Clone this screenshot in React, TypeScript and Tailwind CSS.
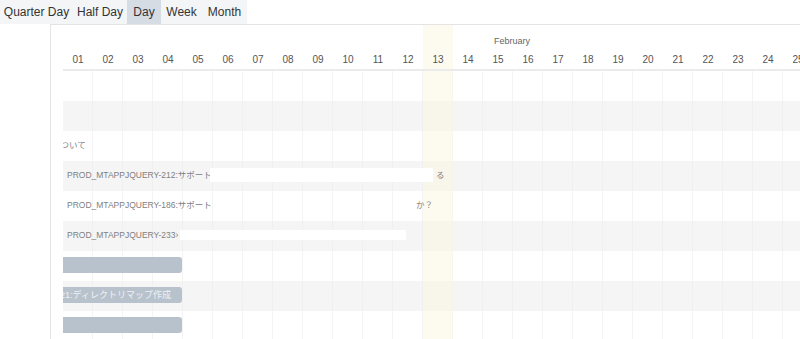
import React from "react";

const days = Array.from({ length: 27 }, (_, i) => String(i + 1).padStart(2, "0"));

const tabs: { label: string; w: string; active?: boolean }[] = [
  { label: "Quarter Day", w: "w-[73px]" },
  { label: "Half Day", w: "w-[54px]" },
  { label: "Day", w: "w-[34px]", active: true },
  { label: "Week", w: "w-[41px]" },
  { label: "Month", w: "w-[45px]" },
];

function Row({ even, children }: { even: boolean; children?: React.ReactNode }) {
  return (
    <div
      className={`h-[30px] flex items-center pb-[2px] bg-[length:30px_100%] ${
        even
          ? "bg-white bg-[linear-gradient(to_right,transparent_29px,#f4f4f4_29px)]"
          : "bg-[#f5f5f5] bg-[linear-gradient(to_right,transparent_29px,#f0f0f0_29px)]"
      }`}
    >
      {children}
    </div>
  );
}

const label = "relative z-[2] shrink-0 text-[8.5px] leading-[12px] text-[#808080] whitespace-nowrap overflow-hidden";

function GrayBar({ children }: { children?: React.ReactNode }) {
  return (
    <div className="ml-[-5px] w-[124px] h-[16px] shrink-0 rounded-[3px] bg-[#b8c2cc] flex items-center pl-[2px] overflow-hidden">
      {children}
    </div>
  );
}

export default function App() {
  return (
    <div className="w-[800px] h-[339px] overflow-hidden bg-white font-['Liberation_Sans','Noto_Sans_CJK_JP',sans-serif]">
      <div className="flex h-[24px] w-[247px] bg-[#f4f5f7] text-[12px] text-[#333]">
        {tabs.map((t) => (
          <button
            key={t.label}
            className={`${t.w} h-full flex items-center justify-center whitespace-nowrap ${t.active ? "bg-[#d6dce4]" : ""}`}
          >
            {t.label}
          </button>
        ))}
      </div>
      <div className="flex">
        <div className="w-[50px] shrink-0" />
        <div className="flex-1 min-w-0 border-l border-t border-[#e4e4e4] pl-[12px]">
          <div className="overflow-hidden">
            <div className="relative w-[810px]">
              <div className="absolute z-[1] top-0 bottom-0 left-[360px] w-[30px] bg-[#fbf5e1]/50" />
              <div className="relative z-[2] h-[46px] border-b-2 border-[#ebebeb] pt-[10px] flex flex-col">
                <div className="pl-[431px] h-[12px] text-[9px] leading-[12px] text-[#666]">February</div>
                <div className="flex mt-[7px] h-[12px]">
                  {days.map((d) => (
                    <div key={d} className="w-[30px] shrink-0 text-center text-[10px] leading-[12px] text-[#555]">
                      {d}
                    </div>
                  ))}
                </div>
              </div>
              <Row even />
              <Row even={false} />
              <Row even>
                <span className={`${label} ml-[-11px]`}>について</span>
              </Row>
              <Row even={false}>
                <span className={`${label} ml-[4px] w-[143px]`}>PROD_MTAPPJQUERY-212:サポート</span>
                <div className="relative z-[2] w-[223px] h-[14px] shrink-0 bg-white" />
                <span className={`${label} ml-[3px]`}>る</span>
              </Row>
              <Row even>
                <span className={`${label} ml-[4px] w-[349px]`}>PROD_MTAPPJQUERY-186:サポート</span>
                <span className={label}>か？</span>
              </Row>
              <Row even={false}>
                <span className={`${label} ml-[4px] w-[113px]`}>PROD_MTAPPJQUERY-233›</span>
                <div className="relative z-[2] w-[226px] h-[10px] shrink-0 bg-white" />
              </Row>
              <Row even>
                <GrayBar />
              </Row>
              <Row even={false}>
                <GrayBar>
                  <span className="text-[9px] leading-[12px] text-[#eef1f4] whitespace-nowrap">
                    21:ディレクトリマップ作成
                  </span>
                </GrayBar>
              </Row>
              <Row even>
                <GrayBar />
              </Row>
            </div>
          </div>
        </div>
      </div>
    </div>
  );
}
